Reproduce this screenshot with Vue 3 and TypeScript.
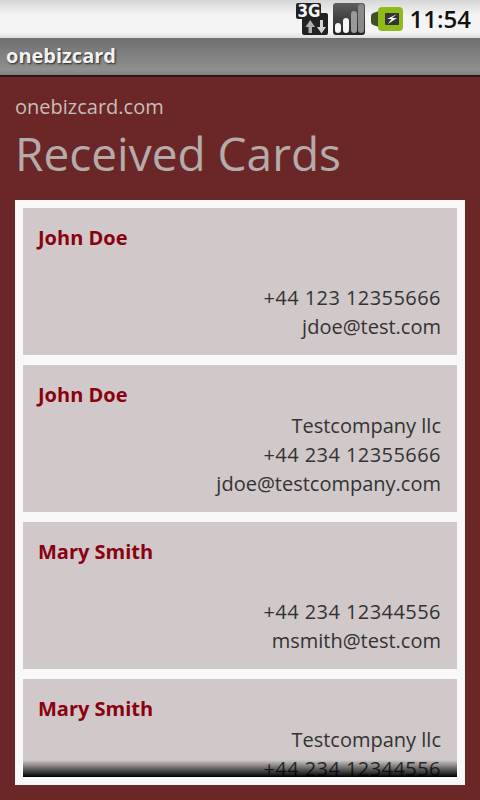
<script setup lang="ts">
interface Card { name: string; company: string; phone: string; email: string }
const cards: Card[] = [
  { name: 'John Doe', company: '', phone: '+44 123 12355666', email: 'jdoe@test.com' },
  { name: 'John Doe', company: 'Testcompany llc', phone: '+44 234 12355666', email: 'jdoe@testcompany.com' },
  { name: 'Mary Smith', company: '', phone: '+44 234 12344556', email: 'msmith@test.com' },
  { name: 'Mary Smith', company: 'Testcompany llc', phone: '+44 234 12344556', email: '' },
]
</script>

<template>
  <div class="screen">
    <div class="status">
      <svg class="ic-3g" width="32" height="32" viewBox="0 0 32 32">
        <path d="M2 0h21a2 2 0 0 1 2 2v8h5a2 2 0 0 1 2 2v18a2 2 0 0 1-2 2H8a2 2 0 0 1-2-2V16H2a2 2 0 0 1-2-2V2a2 2 0 0 1 2-2z" fill="#222" />
        <text x="1.500" y="14" class="g3" textLength="23" lengthAdjust="spacingAndGlyphs">3G</text>
        <path d="M12.500 30v-6h-3l4.750-7 4.750 7h-3v6z" fill="#b0b0b0" />
        <path d="M24 17h3v7h3l-4.500 6.500-4.500-6.500h3z" fill="#d4d4d4" />
      </svg>
      <svg class="ic-sig" width="32" height="32" viewBox="0 0 32 32">
        <defs>
          <linearGradient id="sigbg" x1="0" y1="0" x2="0" y2="1">
            <stop offset="0" stop-color="#5e5e5e" />
            <stop offset="1" stop-color="#222" />
          </linearGradient>
        </defs>
        <rect x="0" y="0" width="32" height="32" rx="3" fill="url(#sigbg)" />
        <rect x="2" y="20" width="6" height="10" rx="3" fill="#f6f6f6" />
        <rect x="10" y="15" width="6" height="15" rx="3" fill="#f6f6f6" />
        <rect x="18" y="8" width="6" height="22" rx="3" fill="#9a9a9a" />
        <rect x="25" y="1" width="6" height="29" rx="3" fill="#8a8a8a" />
      </svg>
      <svg class="ic-bat" width="32" height="24" viewBox="0 0 32 24">
        <path d="M0 9q0-2 2-3l6-2h4v16H8l-6-2q-2-1-2-3z" fill="#3f5226" />
        <rect x="7" y="0" width="25" height="24" rx="4" fill="#8fbb1a" />
        <rect x="14" y="6" width="14" height="12" rx="1" fill="#343434" />
        <path d="M26 7l-10 5h4.500L17 17l9-6h-5z" fill="#f4f4f4" />
      </svg>
      <span class="time">11:54</span>
    </div>
    <div class="titlebar"><span>onebizcard</span></div>
    <div class="main">
      <div class="site">onebizcard.com</div>
      <h1 class="heading">Received Cards</h1>
      <div class="panel">
        <div class="list">
          <div v-for="(c, i) in cards" :key="i" class="card">
            <div class="name">{{ c.name }}</div>
            <div class="lines" :class="{ nocompany: !c.company }">
              <div v-if="c.company" class="line">{{ c.company }}</div>
              <div class="line phone">{{ c.phone }}</div>
              <div v-if="c.email" class="line">{{ c.email }}</div>
            </div>
          </div>
          <div class="fade"></div>
        </div>
      </div>
    </div>
  </div>
</template>

<style>
html, body { margin: 0; background: #6b2727; }
</style>

<style scoped>
.screen {
  width: 480px;
  height: 800px;
  display: flex;
  flex-direction: column;
  overflow: hidden;
  font-family: "Open Sans", "Noto Sans", sans-serif;
  background: #6b2727;
}
.status {
  height: 38px;
  box-sizing: border-box;
  display: flex;
  align-items: center;
  justify-content: flex-end;
  padding-right: 9px;
  background: linear-gradient(#d6d6d6, #f4f4f4 40%, #f4f4f4 85%, #dcdcdc);
}
.ic-3g { margin-right: 5px; overflow: visible; }
.ic-sig { margin-right: 6px; }
.ic-bat { margin-right: 7px; }
.g3 { font: bold 17px "DejaVu Sans", sans-serif; fill: #f4f4f4; }
.time { font-size: 24px; font-weight: 600; color: #111; line-height: 38px; }
.titlebar {
  height: 39px;
  box-sizing: border-box;
  padding: 0 0 2px 6px;
  display: flex;
  align-items: center;
  background: linear-gradient(#6f6f6f, #8f8f8f 85%, #828282);
  border-bottom: 2px solid #3a1212;
}
.titlebar span {
  color: #f2f2f2;
  font-size: 20px;
  font-weight: 700;
  text-shadow: 1px 1px 2px #222;
}
.main {
  flex: 1;
  display: flex;
  flex-direction: column;
  min-height: 0;
  padding: 16px 15px 15px;
}
.site { font-size: 20px; line-height: 27px; color: #c9bcbc; }
.heading {
  margin: 5px 0 0;
  font-size: 46px;
  font-weight: 400;
  line-height: 56px;
  color: #b5abab;
  height: 75px;
}
.panel {
  flex: 1;
  min-height: 0;
  padding: 8px;
  background: #f8f8f8;
}
.list {
  position: relative;
  height: 100%;
  overflow: hidden;
  display: flex;
  flex-direction: column;
  gap: 10px;
}
.card {
  flex: none;
  height: 147px;
  box-sizing: border-box;
  padding: 15px 16px 0;
  background: #d0c8c9;
}
.name {
  font-size: 20px;
  font-weight: 700;
  line-height: 29px;
  color: #8a0210;
  margin-left: -1px;
}
.lines { margin-top: 2px; }
.lines.nocompany { padding-top: 29px; }
.line {
  font-size: 20px;
  line-height: 29px;
  height: 29px;
  text-align: right;
  color: #333;
}
.phone { letter-spacing: 0.44px; }
.fade {
  position: absolute;
  left: 0;
  right: 0;
  bottom: 0;
  height: 17px;
  background: linear-gradient(rgba(0, 0, 0, 0), #000);
}
</style>
